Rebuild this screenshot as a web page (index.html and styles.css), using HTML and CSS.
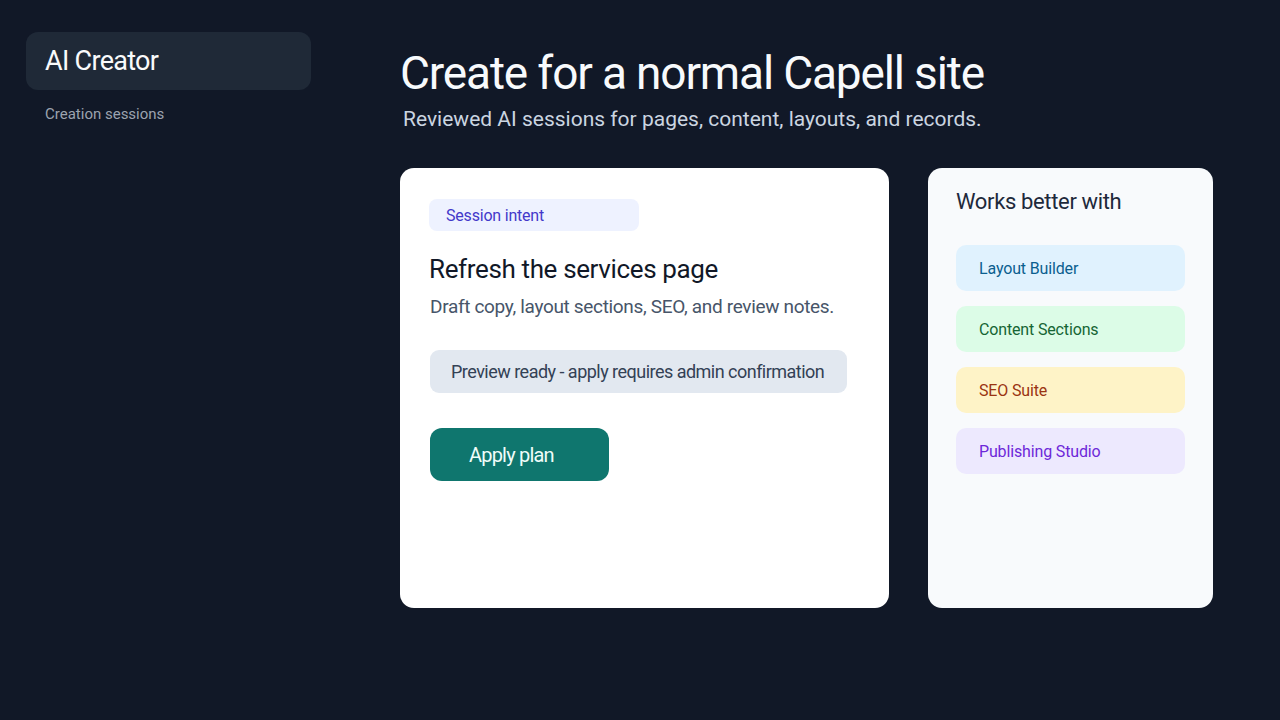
FILE: index.html
```html
<!DOCTYPE html>
<html lang="en">
<head>
<meta charset="utf-8">
<title>AI Creator</title>
<link rel="stylesheet" href="styles.css">
</head>
<body>
<div class="app">
  <aside class="sidebar">
    <div class="nav-active">AI Creator</div>
    <div class="nav-link">Creation sessions</div>
  </aside>
  <main class="main">
    <h1 class="title">Create for a normal Capell site</h1>
    <p class="subtitle">Reviewed AI sessions for pages, content, layouts, and records.</p>
    <div class="cards">
      <section class="card session">
        <span class="tag">Session intent</span>
        <h2 class="session-title">Refresh the services page</h2>
        <p class="session-desc">Draft copy, layout sections, SEO, and review notes.</p>
        <div class="status">Preview ready - apply requires admin confirmation</div>
        <button class="apply">Apply plan</button>
      </section>
      <section class="card side">
        <h3 class="side-title">Works better with</h3>
        <ul class="modules">
          <li class="module blue">Layout Builder</li>
          <li class="module green">Content Sections</li>
          <li class="module amber">SEO Suite</li>
          <li class="module violet">Publishing Studio</li>
        </ul>
      </section>
    </div>
  </main>
</div>
</body>
</html>
```
FILE: styles.css
```css
* { box-sizing: border-box; }
html, body {
  margin: 0;
  height: 100%;
  background: #111827;
  font-family: Roboto, Inter, "Noto Sans", "Liberation Sans", sans-serif;
}
.app {
  display: flex;
  min-height: 720px;
}
.sidebar {
  width: 400px;
  padding: 32px 0 0 26px;
}
.nav-active {
  width: 285px;
  height: 58px;
  background: #1f2937;
  border-radius: 12px;
  color: #f9fafb;
  font-size: 27px;
  letter-spacing: -0.7px;
  padding-left: 19px;
  display: flex;
  align-items: center;
}
.nav-link {
  margin-top: 15px;
  padding-left: 19px;
  color: #9ca3af;
  font-size: 15px;
}
.main {
  flex: 1;
  padding-top: 46px;
}
.title {
  margin: 0;
  font-size: 46px;
  font-weight: 400;
  line-height: 54px;
  letter-spacing: -1.15px;
  color: #f8fafc;
}
.subtitle {
  margin: 5px 0 0 3px;
  font-size: 21px;
  line-height: 28px;
  color: #cbd5e1;
}
.cards {
  display: flex;
  gap: 39px;
  margin-top: 35px;
}
.card {
  height: 440px;
  border-radius: 14px;
}
.session {
  width: 489px;
  background: #ffffff;
  padding: 31px 29px;
  display: flex;
  flex-direction: column;
  align-items: flex-start;
}
.tag {
  width: 210px;
  height: 32px;
  background: #eef2ff;
  color: #4338ca;
  border-radius: 8px;
  font-size: 16px;
  letter-spacing: -0.2px;
  padding-left: 17px;
  display: flex;
  align-items: center;
}
.session-title {
  margin: 22px 0 0;
  font-size: 26px;
  font-weight: 400;
  line-height: 32px;
  letter-spacing: -0.36px;
  color: #111827;
}
.session-desc {
  margin: 9px 0 0 1px;
  font-size: 19px;
  line-height: 26px;
  letter-spacing: -0.33px;
  color: #475569;
}
.status {
  margin: 30px 0 0 1px;
  width: 417px;
  height: 43px;
  background: #e2e8f0;
  border-radius: 9px;
  color: #334155;
  font-size: 18px;
  letter-spacing: -0.52px;
  white-space: nowrap;
  padding-left: 21px;
  display: flex;
  align-items: center;
}
.apply {
  margin: 35px 0 0 1px;
  width: 179px;
  height: 53px;
  background: #0f766e;
  color: #f0fdfa;
  border: none;
  border-radius: 12px;
  font-family: inherit;
  font-size: 20px;
  letter-spacing: -0.8px;
  text-align: left;
  padding-left: 39px;
}
.side {
  width: 285px;
  background: #f8fafc;
  padding: 20px 28px;
}
.side-title {
  margin: 0;
  font-size: 22px;
  font-weight: 400;
  line-height: 28px;
  letter-spacing: -0.35px;
  color: #1e293b;
}
.modules {
  list-style: none;
  margin: 29px 0 0;
  padding: 0;
  display: flex;
  flex-direction: column;
  gap: 15px;
}
.module {
  height: 46px;
  border-radius: 10px;
  font-size: 16px;
  letter-spacing: -0.15px;
  padding-left: 23px;
  display: flex;
  align-items: center;
}
.blue { background: #e0f2fe; color: #0b5f8f; }
.green { background: #dcfce7; color: #166534; }
.amber { background: #fef3c7; color: #9a3412; }
.violet { background: #ede9fe; color: #6d28d9; }
```
